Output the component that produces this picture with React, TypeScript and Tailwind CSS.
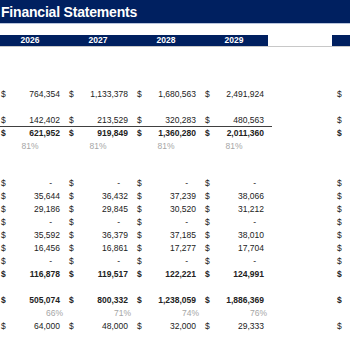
import { FC } from "react";

type Row = {
	vals?: string[];
	bold?: boolean;
	pct?: "center" | "right";
	far?: boolean;
	line?: boolean;
	h?: string;
};

const navy = "bg-[#002060]";

const rows: Row[] = [
	{},
	{},
	{ h: "h-[15px]" },
	{ vals: ["764,354", "1,133,378", "1,680,563", "2,491,924"], far: true },
	{},
	{ vals: ["142,402", "213,529", "320,283", "480,563"], far: true, line: true },
	{ vals: ["621,952", "919,849", "1,360,280", "2,011,360"], far: true, bold: true },
	{ vals: ["81%", "81%", "81%", "81%"], pct: "center" },
	{ h: "h-[12px]" },
	{ h: "h-[12px]" },
	{ vals: ["-", "-", "-", "-"], far: true },
	{ vals: ["35,644", "36,432", "37,239", "38,066"], far: true },
	{ vals: ["29,186", "29,845", "30,520", "31,212"], far: true },
	{ vals: ["-", "-", "-", "-"], far: true },
	{ vals: ["35,592", "36,379", "37,185", "38,010"], far: true },
	{ vals: ["16,456", "16,861", "17,277", "17,704"], far: true },
	{ vals: ["-", "-", "-", "-"], far: true },
	{ vals: ["116,878", "119,517", "122,221", "124,991"], far: true, bold: true },
	{},
	{ vals: ["505,074", "800,332", "1,238,059", "1,886,369"], far: true, bold: true },
	{ vals: ["66%", "71%", "74%", "76%"], pct: "right" },
	{ vals: ["64,000", "48,000", "32,000", "29,333"], far: true },
	{},
];

const Cell: FC<{ v: string; row: Row }> = ({ v, row }) => {
	if (row.pct === "center") {
		return <div className="w-[68px] pr-[8px] text-center text-[#a6a6a6]">{v}</div>;
	}
	if (row.pct === "right") {
		return <div className="w-[68px] pr-[5px] text-right text-[#a6a6a6]">{v}</div>;
	}
	return (
		<div className="w-[68px] flex">
			<span className="pl-[1px]">$</span>
			<span className={"flex-1 text-right " + (v === "-" ? "pr-[16px]" : "pr-[8px]")}>{v}</span>
		</div>
	);
};

const App: FC = () => {
	return (
		<div
			className="w-[350px] h-[350px] overflow-hidden bg-white text-[8.5px] text-[#222222]"
			style={{ fontFamily: "'Liberation Sans', Arial, sans-serif" }}
		>
			<div className={navy + " h-[24px] border-b border-[#b8c4dc] flex items-center pt-[2px]"}>
				<span className="pl-[1px] text-white font-bold text-[14px] tracking-[-0.2px]">Financial Statements</span>
			</div>
			<div className="h-[11px]" />
			<div className="flex h-[12px] border-b border-[#c8c8c8]">
				<div className={navy + " w-[268px] flex items-center text-white font-bold"}>
					{["2026", "2027", "2028", "2029"].map((y) => (
						<div key={y} className="w-[68px] shrink-0 pr-[8px] text-center">
							{y}
						</div>
					))}
				</div>
				<div className="w-[64px]" />
				<div className={navy + " flex-1"} />
			</div>
			{rows.map((row, i) => (
				<div key={i} className={"flex items-center " + (row.h ?? "h-[13px]") + (row.bold ? " font-bold" : "")}>
					<div className={"flex w-[272px] h-full items-center " + (row.line ? "border-b border-[#404040]" : "")}>
						{row.vals ? row.vals.map((v, j) => <Cell key={j} v={v} row={row} />) : null}
					</div>
					{row.far ? <span className="pl-[65px]">$</span> : null}
				</div>
			))}
		</div>
	);
};

export default App;
